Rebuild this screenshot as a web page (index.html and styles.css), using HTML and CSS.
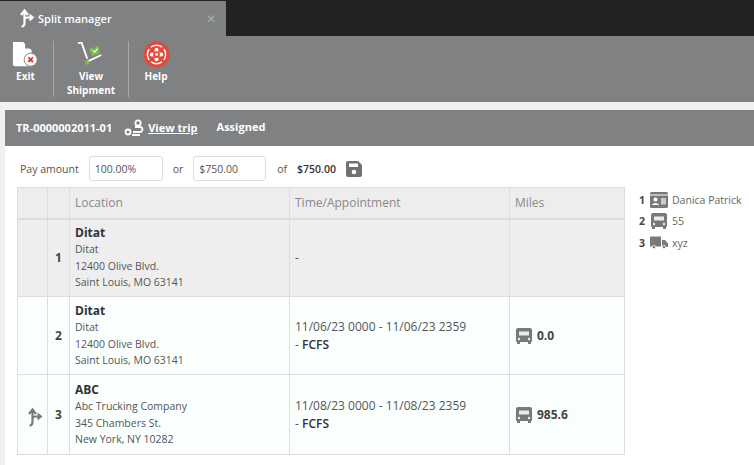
FILE: index.html
```html
<!DOCTYPE html>
<html lang="en">
<head>
<meta charset="utf-8">
<title>Split manager</title>
<link rel="stylesheet" href="styles.css">
</head>
<body>
<svg class="defs" width="0" height="0" aria-hidden="true">
  <symbol id="split" viewBox="0 0 20 20">
    <path d="M6.5 18.5c2.5 0 3-1.5 3-4V4M6 7l3.500-4.500L13 7M9.500 12c0-2 1-2.500 3-2.500h3" fill="none" stroke="currentColor" stroke-width="2.200"/>
    <path d="M14.500 5.500l5 4-5 4z" fill="currentColor"/>
  </symbol>
  <symbol id="bus" viewBox="0 0 18 18">
    <path d="M3 1h12a2 2 0 0 1 2 2v11a1 1 0 0 1-1 1v2h-3v-2H5v2H2v-2a1 1 0 0 1-1-1V3a2 2 0 0 1 2-2z" fill="currentColor"/>
    <path d="M4 4.500h10v4H4z" fill="#fff" fill-opacity=".85"/>
    <circle cx="4" cy="12" r="1.200" fill="#fff" fill-opacity=".85"/>
    <circle cx="14" cy="12" r="1.200" fill="#fff" fill-opacity=".85"/>
  </symbol>
</svg>

<div class="tabbar">
  <div class="tab">
    <svg class="tab-icon"><use href="#split"/></svg>
    <span class="tab-title">Split manager</span>
    <span class="tab-close">✕</span>
  </div>
</div>

<div class="toolbar">
  <div class="tool tool-exit">
    <svg class="tool-icon" viewBox="0 0 30 30">
      <path d="M1 1h11l9 9v17H3a2 2 0 0 1-2-2z" fill="#fff"/>
      <path d="M14 1l7 7h-7z" fill="#7f8183"/>
      <circle cx="20" cy="20" r="7" fill="#fff" stroke="#7f8183" stroke-width="1"/>
      <path d="M17.500 17.500l5 5M22.500 17.500l-5 5" stroke="#d8383a" stroke-width="2"/>
    </svg>
    <span>Exit</span>
  </div>
  <div class="tool tool-view">
    <svg class="tool-icon" viewBox="0 0 30 30">
      <path d="M1 2h4l6 17M11 22l15-7" fill="none" stroke="#fff" stroke-width="2"/>
      <circle cx="11" cy="23" r="2.500" fill="#7cc04a"/>
      <path d="M13 8l3-1 2 2 2-3 3-1 1 8-8 3z" fill="#7cc04a"/>
      <path d="M17 10l2 2 3-4" fill="none" stroke="#fff" stroke-width="1.200"/>
    </svg>
    <span>View<br>Shipment</span>
  </div>
  <div class="tool tool-help">
    <svg class="tool-icon help-icon" viewBox="0 0 28 28">
      <circle cx="14" cy="14" r="13.500" fill="#e2483c"/>
      <circle cx="14" cy="14" r="9.500" fill="none" stroke="#fff" stroke-width="1.500"/>
      <rect x="7" y="12" width="14" height="4" rx="2" fill="#fff"/>
      <rect x="12" y="7" width="4" height="14" rx="2" fill="#fff"/>
      <path d="M6 6l5 5M22 6l-5 5M6 22l5-5M22 22l-5-5" stroke="#e2483c" stroke-width="2.500"/>
      <circle cx="14" cy="14" r="3.500" fill="#e2483c"/>
      <circle cx="14" cy="14" r="1.500" fill="#fff"/>
    </svg>
    <span>Help</span>
  </div>
</div>

<main class="content">
  <div class="trip-bar">
    <span class="trip-id">TR-0000002011-01</span>
    <svg class="trip-icon" viewBox="0 0 20 18">
      <circle cx="4" cy="13" r="2.500" fill="none" stroke="#fff" stroke-width="1.800"/>
      <circle cx="14" cy="4" r="2.700" fill="none" stroke="#fff" stroke-width="1.800"/>
      <path d="M11 8h5a2.500 2.500 0 0 1 0 5H9M8 16h8" fill="none" stroke="#fff" stroke-width="1.800"/>
    </svg>
    <a class="trip-link">View trip</a>
    <span class="trip-status">Assigned</span>
  </div>

  <div class="pay-row">
    <span class="pay-label">Pay amount</span>
    <span class="pay-input pay-pct">100.00%</span>
    <span class="pay-or">or</span>
    <span class="pay-input pay-amt">$750.00</span>
    <span class="pay-of">of</span>
    <strong class="pay-total">$750.00</strong>
    <svg class="save" viewBox="0 0 16 16">
      <path d="M2 0h10l4 4v10a2 2 0 0 1-2 2H2a2 2 0 0 1-2-2V2a2 2 0 0 1 2-2z" fill="#6f7173"/>
      <rect x="3" y="2.500" width="9" height="3.500" fill="#fff"/>
      <circle cx="8" cy="11" r="2.300" fill="#fff"/>
    </svg>
  </div>

  <div class="body-row">
    <table class="stops">
      <colgroup>
        <col class="c-a"><col class="c-b"><col class="c-c"><col class="c-d"><col class="c-e">
      </colgroup>
      <thead>
        <tr class="head"><th></th><th></th><th>Location</th><th>Time/Appointment</th><th>Miles</th></tr>
      </thead>
      <tbody>
        <tr class="done">
          <td></td>
          <td class="num">1</td>
          <td class="loc"><b>Ditat</b>Ditat<br>12400 Olive Blvd.<br>Saint Louis, MO 63141</td>
          <td class="time">-</td>
          <td></td>
        </tr>
        <tr class="open">
          <td></td>
          <td class="num">2</td>
          <td class="loc"><b>Ditat</b>Ditat<br>12400 Olive Blvd.<br>Saint Louis, MO 63141</td>
          <td class="time">11/06/23 0000 - 11/06/23 2359<br>- <strong>FCFS</strong></td>
          <td><div class="miles"><svg class="bus"><use href="#bus"/></svg><strong>0.0</strong></div></td>
        </tr>
        <tr class="open last">
          <td class="split-cell"><svg class="split-icon"><use href="#split"/></svg></td>
          <td class="num">3</td>
          <td class="loc"><b>ABC</b>Abc Trucking Company<br>345 Chambers St.<br>New York, NY 10282</td>
          <td class="time">11/08/23 0000 - 11/08/23 2359<br>- <strong>FCFS</strong></td>
          <td><div class="miles"><svg class="bus"><use href="#bus"/></svg><strong>985.6</strong></div></td>
        </tr>
      </tbody>
    </table>

    <ul class="legend">
      <li><b>1</b>
        <svg class="lg-icon" viewBox="0 0 18 16">
          <rect x="0" y="0" width="18" height="16" rx="1.500" fill="#77797b"/>
          <rect x="0" y="2.500" width="18" height="1" fill="#fff"/>
          <circle cx="5.500" cy="7.500" r="2" fill="#fff"/>
          <path d="M2 13c0-2.500 7-2.500 7 0z" fill="#fff"/>
          <rect x="11" y="6" width="5" height="6.500" fill="#c9cacb"/>
        </svg>
        <span>Danica Patrick</span></li>
      <li><b>2</b><svg class="lg-icon lg-bus"><use href="#bus"/></svg><span>55</span></li>
      <li><b>3</b>
        <svg class="lg-icon" viewBox="0 0 18 14">
          <path d="M0 1.500a1 1 0 0 1 1-1h10v10H0zM12 4h3l3 3.500V11h-6z" fill="#77797b"/>
          <circle cx="4" cy="11" r="1.700" fill="#77797b" stroke="#fff" stroke-width=".7"/>
          <circle cx="14" cy="11" r="1.700" fill="#77797b" stroke="#fff" stroke-width=".7"/>
        </svg>
        <span>xyz</span></li>
    </ul>
  </div>
</main>
</body>
</html>
```

FILE: styles.css
```css
* { box-sizing: border-box; }
html, body { margin: 0; padding: 0; }
body {
  width: 754px;
  height: 465px;
  overflow: hidden;
  background: #fff;
  font-family: "Open Sans", "Liberation Sans", sans-serif;
  font-size: 12px;
  color: #555;
}
.defs { position: absolute; }

.tabbar {
  height: 36px;
  padding-top: 1px;
  background: #222;
  display: flex;
}
.tab {
  width: 226px;
  background: #7f8183;
  color: #fff;
  display: flex;
  align-items: center;
  padding-left: 15px;
  padding-bottom: 1px;
}
.tab-icon { width: 20px; height: 20px; color: #fff; }
.tab-title { margin-left: 3px; font-size: 11px; font-weight: 600; }
.tab-close { margin-left: auto; margin-right: 10px; font-size: 12px; color: #a9abad; }

.toolbar {
  height: 66px;
  background: #7f8183;
  display: flex;
  align-items: flex-start;
  padding-top: 5px;
  color: #fff;
  font-size: 10px;
  font-weight: 700;
  line-height: 14px;
  text-align: center;
}
.tool {
  display: flex;
  flex-direction: column;
  align-items: center;
  height: 56px;
  border-right: 1px solid #a6a8aa;
}
.tool-exit { width: 54px; padding-right: 2px; }
.tool-view { width: 75px; }
.tool-help { width: 54px; border-right: 0; }
.tool-icon { width: 28px; height: 28px; margin-bottom: 0; }
.help-icon { width: 27px; height: 27px; margin-bottom: 1px; }

.content {
  height: 363px;
  background: #f0f0f0;
  padding: 8px 0 0 5px;
}
.trip-bar {
  height: 36px;
  background: #7f8183;
  color: #fff;
  font-size: 11px;
  font-weight: 700;
  display: flex;
  align-items: center;
  padding: 0 0 1px 11px;
}
.trip-icon { width: 20px; height: 18px; margin-left: 12px; }
.trip-link { margin-left: 4px; text-decoration: underline; }
.trip-status { margin-left: 19px; padding-bottom: 2px; }

.pay-row {
  height: 41px;
  background: #fff;
  display: flex;
  align-items: center;
  padding: 4px 0 0 15px;
  font-size: 10.500px;
  color: #555;
}
.pay-input {
  height: 25px;
  display: flex;
  align-items: center;
  border: 1px solid #ddd;
  border-radius: 3px;
}
.pay-pct { width: 74px; margin-left: 10px; padding-left: 5px; }
.pay-or { margin-left: 10px; }
.pay-amt { width: 73px; margin-left: 10px; padding-left: 5px; }
.pay-of { margin-left: 11px; }
.pay-total { margin-left: 10px; color: #333; font-weight: 600; }
.save { width: 16px; height: 16px; margin-left: 10px; }

.body-row {
  background: #fff;
  height: 278px;
  display: flex;
  align-items: flex-start;
  padding-left: 12px;
}
.stops {
  width: 607px;
  border-collapse: collapse;
  table-layout: fixed;
  border: 1px solid #ddd;
  flex: none;
}
.c-a { width: 30px; }
.c-b { width: 22px; }
.c-c { width: 220px; }
.c-d { width: 220px; }
.c-e { width: 115px; }
.stops th, .stops td {
  border: 1px solid #ddd;
  padding: 0 0 0 5px;
  text-align: left;
  vertical-align: middle;
}
.stops th {
  height: 31px;
  background: #ededed;
  border-bottom-width: 2px;
  font-weight: 400;
  font-size: 12px;
  color: #8a8a8a;
}
.done td { background: #eeeeee; height: 78px; }
.open td { background: #fafffe; height: 78px; }
.last td { height: 80px; }
.num { font-weight: 700; color: #444; text-align: center !important; padding: 0 !important; }
.loc { font-size: 10.500px; line-height: 16.300px; color: #555; }
.loc b { display: block; font-size: 12px; color: #333; font-weight: 700; }
.time { font-size: 12px; line-height: 18px; color: #555; }
.time strong { color: #333; font-weight: 600; }
.miles {
  display: flex;
  align-items: center;
  gap: 4px;
  font-size: 12px;
  color: #444;
}
.miles strong { font-weight: 700; }
.bus { width: 18px; height: 18px; color: #77797b; }
.split-cell { text-align: center !important; padding: 0 !important; }
.split-icon { width: 20px; height: 20px; color: #77797b; display: block; margin: 0 auto; transform: translateY(2px); }

.legend {
  list-style: none;
  margin: 0;
  padding: 2px 0 0 14px;
  font-size: 10.500px;
  color: #666;
}
.legend li {
  display: flex;
  align-items: center;
  height: 21.500px;
  white-space: nowrap;
}
.legend b { width: 11px; color: #444; font-weight: 700; }
.lg-icon { width: 18px; height: 16px; margin-right: 4px; color: #77797b; }
.lg-bus { height: 18px; }
```
